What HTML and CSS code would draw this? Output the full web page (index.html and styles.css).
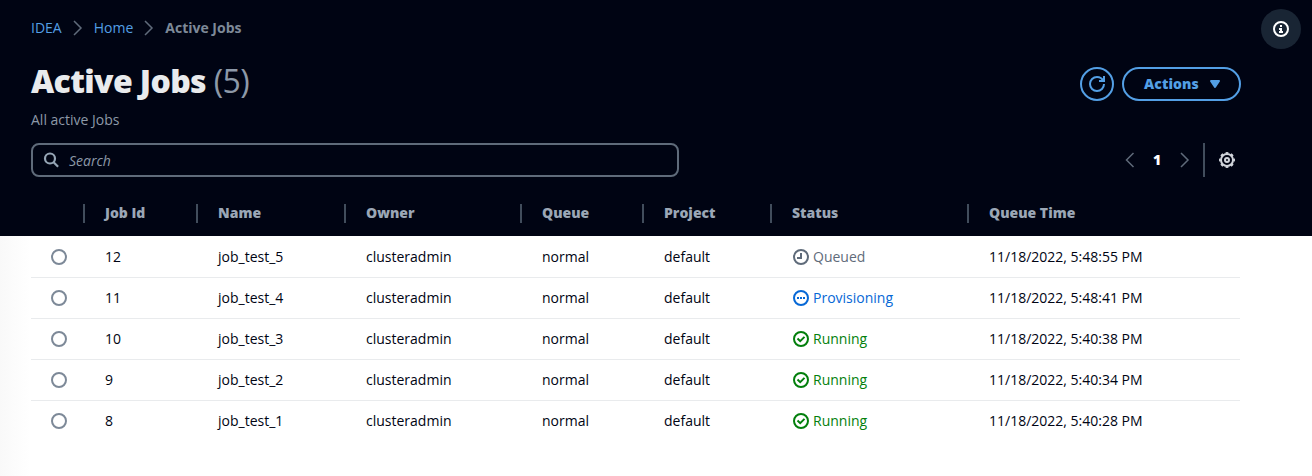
FILE: index.html
```
<!DOCTYPE html>
<html lang="en">
<head>
<meta charset="utf-8">
<title>Active Jobs</title>
<link rel="stylesheet" href="styles.css">
</head>
<body>
<div class="page">
  <header class="top">
    <div class="crumb-row">
      <nav class="crumbs">
        <a class="link">IDEA</a>
        <svg class="sep" viewBox="0 0 16 16"><path d="M4 1l7 7-7 7"/></svg>
        <a class="link">Home</a>
        <svg class="sep" viewBox="0 0 16 16"><path d="M4 1l7 7-7 7"/></svg>
        <span class="current">Active Jobs</span>
      </nav>
      <button class="info" aria-label="Info"><svg class="icon" viewBox="0 0 16 16"><circle cx="8" cy="8" r="7"/><path d="M8 11V8H6M10 11H6M8 4v2"/></svg></button>
    </div>
    <div class="title-row">
      <h1 class="title">Active Jobs <span class="count">(5)</span></h1>
      <div class="actions">
        <button class="refresh" aria-label="Refresh"><svg class="icon" viewBox="0 0 16 16"><path d="M15 8c0 3.870-3.130 7-7 7s-7-3.130-7-7 3.130-7 7-7c2.790 0 5.200 1.630 6.330 4"/><path d="M10 5h5V0"/></svg></button>
        <button class="menu">Actions<svg class="caret" viewBox="0 0 16 16"><path d="M4 5h8l-4 6z"/></svg></button>
      </div>
    </div>
    <p class="description">All active Jobs</p>
    <div class="tools">
      <div class="search"><svg class="icon" viewBox="0 0 16 16"><circle cx="7" cy="6.500" r="5"/><path d="M10.600 10.200l4.500 4.500"/></svg><span class="placeholder">Search</span></div>
      <div class="paging">
        <svg class="arrow" viewBox="0 0 16 16"><path d="M11.500 1l-7 7 7 7"/></svg>
        <span class="page-number">1</span>
        <svg class="arrow" viewBox="0 0 16 16"><path d="M4 1l7 7-7 7"/></svg>
        <span class="rule"></span>
        <svg class="icon gear" viewBox="0 0 16 16"><circle cx="8" cy="8" r="6"/><circle class="teeth" cx="8" cy="8" r="7.100" pathLength="16"/><circle cx="8" cy="8" r="2"/></svg>
      </div>
    </div>
    <div class="row head">
      <span class="cell"></span><span class="cell">Job Id</span><span class="cell">Name</span><span class="cell">Owner</span><span class="cell">Queue</span><span class="cell">Project</span><span class="cell">Status</span><span class="cell">Queue Time</span>
    </div>
  </header>
  <main class="body">
    <div class="row">
      <span class="pick"><i class="radio"></i></span><span class="cell">12</span><span class="cell">job_test_5</span><span class="cell">clusteradmin</span><span class="cell">normal</span><span class="cell">default</span>
      <span class="cell status queued"><svg class="icon" viewBox="0 0 16 16"><circle cx="8" cy="8" r="7"/><path d="M8 4v5H4"/></svg>Queued</span><span class="cell">11/18/2022, 5:48:55 PM</span>
    </div>
    <div class="row">
      <span class="pick"><i class="radio"></i></span><span class="cell">11</span><span class="cell">job_test_4</span><span class="cell">clusteradmin</span><span class="cell">normal</span><span class="cell">default</span>
      <span class="cell status provisioning"><svg class="icon" viewBox="0 0 16 16"><circle cx="8" cy="8" r="7"/><path d="M4 8h2M7 8h2M10 8h2"/></svg>Provisioning</span><span class="cell">11/18/2022, 5:48:41 PM</span>
    </div>
    <div class="row">
      <span class="pick"><i class="radio"></i></span><span class="cell">10</span><span class="cell">job_test_3</span><span class="cell">clusteradmin</span><span class="cell">normal</span><span class="cell">default</span>
      <span class="cell status running"><svg class="icon" viewBox="0 0 16 16"><circle cx="8" cy="8" r="7"/><path d="M4.500 7.500l2.700 2.700 4.300-4.300"/></svg>Running</span><span class="cell">11/18/2022, 5:40:38 PM</span>
    </div>
    <div class="row">
      <span class="pick"><i class="radio"></i></span><span class="cell">9</span><span class="cell">job_test_2</span><span class="cell">clusteradmin</span><span class="cell">normal</span><span class="cell">default</span>
      <span class="cell status running"><svg class="icon" viewBox="0 0 16 16"><circle cx="8" cy="8" r="7"/><path d="M4.500 7.500l2.700 2.700 4.300-4.300"/></svg>Running</span><span class="cell">11/18/2022, 5:40:34 PM</span>
    </div>
    <div class="row">
      <span class="pick"><i class="radio"></i></span><span class="cell">8</span><span class="cell">job_test_1</span><span class="cell">clusteradmin</span><span class="cell">normal</span><span class="cell">default</span>
      <span class="cell status running"><svg class="icon" viewBox="0 0 16 16"><circle cx="8" cy="8" r="7"/><path d="M4.500 7.500l2.700 2.700 4.300-4.300"/></svg>Running</span><span class="cell">11/18/2022, 5:40:28 PM</span>
    </div>
  </main>
</div>
</body>
</html>
```
FILE: styles.css
```
* { box-sizing: border-box; }
body {
  margin: 0;
  font: 14px/22px "Open Sans", "Noto Sans", sans-serif;
  color: #000413;
  background: #fff;
}
svg { display: block; flex: none; fill: none; stroke: currentColor; stroke-width: 2; }
button { font: inherit; padding: 0; background: none; border: 0; }
.icon { width: 16px; height: 16px; }
.page { height: 476px; overflow: hidden; }

.top { height: 236px; background: #000413; padding: 9px 72px 0 31px; }
.crumb-row { display: flex; justify-content: space-between; height: 40px; margin-right: -61px; }
.crumbs { display: flex; align-items: center; height: 38px; }
.link { color: #539fe5; }
.sep { width: 16px; height: 16px; margin: 0 8px; color: #5f6b7a; stroke-width: 1.5; }
.current { color: #7d8998; font-weight: 700; }
.info {
  display: grid;
  place-items: center;
  width: 40px;
  height: 40px;
  border-radius: 50%;
  background: #192534;
  color: #fff;
}

.title-row { display: flex; justify-content: space-between; height: 60px; padding-top: 12px; }
.title { margin: 0; font-size: 32px; line-height: 40px; font-weight: 800; letter-spacing: -0.64px; color: #e9ebed; }
.count { font-weight: 400; color: #8d99a8; }
.actions { display: flex; gap: 8px; padding-top: 6px; height: 40px; margin-right: -1px; }
.refresh {
  display: grid;
  place-items: center;
  width: 34px;
  height: 34px;
  border: 2px solid #539fe5;
  border-radius: 50%;
  color: #539fe5;
}
.menu {
  display: flex;
  align-items: center;
  gap: 8px;
  width: 119px;
  height: 34px;
  padding-left: 20px;
  border: 2px solid #539fe5;
  border-radius: 17px;
  color: #539fe5;
  font-weight: 800;
  letter-spacing: 0.1px;
}
.caret { width: 16px; height: 16px; fill: currentColor; stroke-linejoin: round; }
.description { margin: 0; height: 34px; color: #8d99a8; }

.tools { display: flex; justify-content: space-between; height: 34px; }
.search {
  display: flex;
  align-items: center;
  gap: 10px;
  width: 648px;
  padding-left: 10px;
  border: 2px solid #5f6b7a;
  border-radius: 8px;
  color: #95a5b5;
}
.search .icon { stroke-width: 2.200; }
.placeholder { padding-top: 2px; color: #8d99a8; font-style: italic; }
.paging { display: flex; align-items: center; padding-right: 5px; }
.arrow { width: 16px; height: 16px; color: #5f6b7a; stroke-width: 1.5; }
.page-number { width: 39px; padding-right: 1px; text-align: center; color: #fff; font-weight: 800; }
.rule { width: 2px; height: 34px; margin: 0 14px 0 10px; background: #414d5c; }
.gear { color: #d1d5db; }
.teeth { stroke-width: 1.8; stroke-dasharray: 1 1; stroke-dashoffset: 0.5; }

.row {
  display: grid;
  grid-template-columns: 54px 113px 148px 176px 122px 128px 197px 271px;
  align-items: center;
  height: 41px;
  border-bottom: 1px solid #e9ebed;
}
.cell { padding-left: 20px; white-space: nowrap; }
.head { height: 19px; margin-top: 27px; border: 0; color: #9ba7b6; font-weight: 800; }
.head .cell { height: 19px; line-height: 17px; border-right: 2px solid #414d5c; }
.head .cell:last-child { border-right: 0; }

.body { height: 240px; padding: 1px 72px 0 31px; background: linear-gradient(90deg, #f9f9f9, #fff 30px); }
.row:last-child { border-bottom-color: transparent; }
.pick { padding-left: 20px; }
.radio { display: block; width: 16px; height: 16px; border: 2px solid #7d8998; border-radius: 50%; }
.status { display: flex; align-items: center; gap: 4px; padding-left: 21px; }
.queued { color: #5f6b7a; }
.provisioning { color: #0768d6; }
.running { color: #037f0c; }
```
